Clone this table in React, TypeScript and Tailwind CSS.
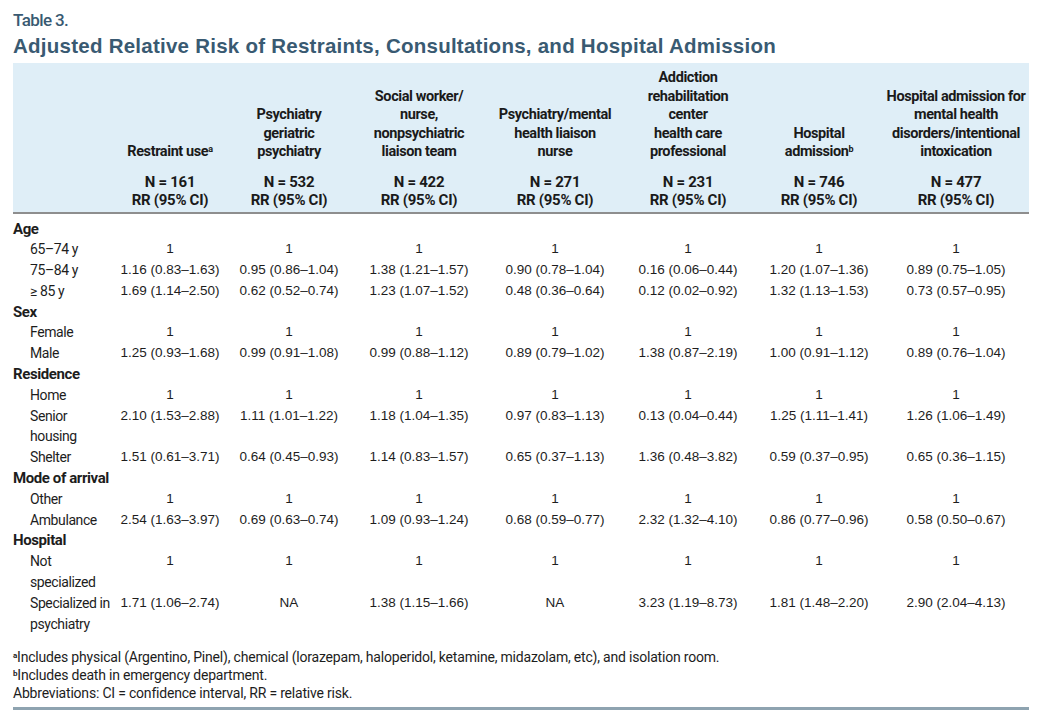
import React from 'react';

const cond = "font-['Roboto','Liberation_Sans',sans-serif]";
const num = "font-['Liberation_Sans',Arial,sans-serif]";

const columns = [
  { title: ['Restraint use'], sup: 'a', n: 161 },
  { title: ['Psychiatry', 'geriatric', 'psychiatry'], n: 532 },
  { title: ['Social worker/', 'nurse,', 'nonpsychiatric', 'liaison team'], n: 422 },
  { title: ['Psychiatry/mental', 'health liaison', 'nurse'], n: 271 },
  { title: ['Addiction', 'rehabilitation', 'center', 'health care', 'professional'], n: 231 },
  { title: ['Hospital', 'admission'], sup: 'b', n: 746 },
  { title: ['Hospital admission for', 'mental health', 'disorders/intentional', 'intoxication'], n: 477 },
];

type Row = { label: string[]; group?: boolean; values?: string[] };

const ones = ['1', '1', '1', '1', '1', '1', '1'];

const rows: Row[] = [
  { label: ['Age'], group: true },
  { label: ['65–74 y'], values: ones },
  { label: ['75–84 y'], values: ['1.16 (0.83–1.63)', '0.95 (0.86–1.04)', '1.38 (1.21–1.57)', '0.90 (0.78–1.04)', '0.16 (0.06–0.44)', '1.20 (1.07–1.36)', '0.89 (0.75–1.05)'] },
  { label: ['≥ 85 y'], values: ['1.69 (1.14–2.50)', '0.62 (0.52–0.74)', '1.23 (1.07–1.52)', '0.48 (0.36–0.64)', '0.12 (0.02–0.92)', '1.32 (1.13–1.53)', '0.73 (0.57–0.95)'] },
  { label: ['Sex'], group: true },
  { label: ['Female'], values: ones },
  { label: ['Male'], values: ['1.25 (0.93–1.68)', '0.99 (0.91–1.08)', '0.99 (0.88–1.12)', '0.89 (0.79–1.02)', '1.38 (0.87–2.19)', '1.00 (0.91–1.12)', '0.89 (0.76–1.04)'] },
  { label: ['Residence'], group: true },
  { label: ['Home'], values: ones },
  { label: ['Senior', 'housing'], values: ['2.10 (1.53–2.88)', '1.11 (1.01–1.22)', '1.18 (1.04–1.35)', '0.97 (0.83–1.13)', '0.13 (0.04–0.44)', '1.25 (1.11–1.41)', '1.26 (1.06–1.49)'] },
  { label: ['Shelter'], values: ['1.51 (0.61–3.71)', '0.64 (0.45–0.93)', '1.14 (0.83–1.57)', '0.65 (0.37–1.13)', '1.36 (0.48–3.82)', '0.59 (0.37–0.95)', '0.65 (0.36–1.15)'] },
  { label: ['Mode of arrival'], group: true },
  { label: ['Other'], values: ones },
  { label: ['Ambulance'], values: ['2.54 (1.63–3.97)', '0.69 (0.63–0.74)', '1.09 (0.93–1.24)', '0.68 (0.59–0.77)', '2.32 (1.32–4.10)', '0.86 (0.77–0.96)', '0.58 (0.50–0.67)'] },
  { label: ['Hospital'], group: true },
  { label: ['Not', 'specialized'], values: ones },
  { label: ['Specialized in', 'psychiatry'], values: ['1.71 (1.06–2.74)', 'NA', '1.38 (1.15–1.66)', 'NA', '3.23 (1.19–8.73)', '1.81 (1.48–2.20)', '2.90 (2.04–4.13)'] },
];

const widths = ['w-[98px]', 'w-[118px]', 'w-[120px]', 'w-[140px]', 'w-[132px]', 'w-[134px]', 'w-[128px]', 'w-[146px]'];

export default function App() {
  return (
    <div className="min-h-[722px] w-[1042px] bg-white px-[13px] pt-[10px] text-[#1d1d1d]">
      <p className={`${cond} text-[17px] font-medium leading-[20px] tracking-[-0.6px] text-[#395a72]`}>Table 3.</p>
      <h1 className={`${num} mt-[4px] text-[20.5px] font-bold leading-[24px] tracking-[0.25px] text-[#395a72]`}>
        Adjusted Relative Risk of Restraints, Consultations, and Hospital Admission
      </h1>

      <table className="mt-[5px] w-[1016px] table-fixed border-collapse">
        <colgroup>
          {widths.map((w, i) => (
            <col key={i} className={w} />
          ))}
        </colgroup>
        <thead className={`${cond} bg-[#dfeef7] font-bold text-[#1a1a1a]`}>
          <tr>
            <th />
            {columns.map((c, i) => (
              <th key={i} className="pt-[6px] pb-[11px] align-bottom text-[14.5px] leading-[18.5px] tracking-[-0.4px]">
                {c.title.map((t, j) => (
                  <div key={j} className="whitespace-nowrap">
                    {t}
                    {c.sup && j === c.title.length - 1 && <sup className="text-[9px]">{c.sup}</sup>}
                  </div>
                ))}
              </th>
            ))}
          </tr>
          <tr className="border-b-2 border-[#8e8e8e]">
            <th />
            {columns.map((c, i) => (
              <th key={i} className="pb-[3px] text-[15px] leading-[18px] tracking-[-0.3px]">
                <div>N = {c.n}</div>
                <div>RR (95% CI)</div>
              </th>
            ))}
          </tr>
        </thead>
        <tbody>
          {rows.map((r, i) =>
            r.group ? (
              <tr key={i}>
                <td colSpan={8} className={`${cond} ${i === 0 ? 'pt-[5px]' : ''} text-[15px] font-bold leading-[20.8px] tracking-[-0.4px]`}>
                  {r.label[0]}
                </td>
              </tr>
            ) : (
              <tr key={i} className="align-top">
                <td className={`${cond} whitespace-nowrap pl-[17px] text-[14px] leading-[20.8px] tracking-[-0.4px]`}>
                  {r.label.map((l, j) => (
                    <div key={j}>{l}</div>
                  ))}
                </td>
                {r.values!.map((v, j) => (
                  <td key={j} className={`${num} text-center text-[13.5px] leading-[20.8px]`}>
                    {v}
                  </td>
                ))}
              </tr>
            ),
          )}
        </tbody>
      </table>

      <div className={`${cond} mt-[14px] w-[1016px] border-b-[3px] border-[#8ea3b0] pb-[5px] text-[14px] leading-[18px] tracking-[-0.2px]`}>
        <p>
          <sup className="text-[8px] font-bold">a</sup>Includes physical (Argentino, Pinel), chemical (lorazepam, haloperidol, ketamine, midazolam, etc), and isolation room.
        </p>
        <p>
          <sup className="text-[8px] font-bold">b</sup>Includes death in emergency department.
        </p>
        <p>Abbreviations: CI = confidence interval, RR = relative risk.</p>
      </div>
    </div>
  );
}
